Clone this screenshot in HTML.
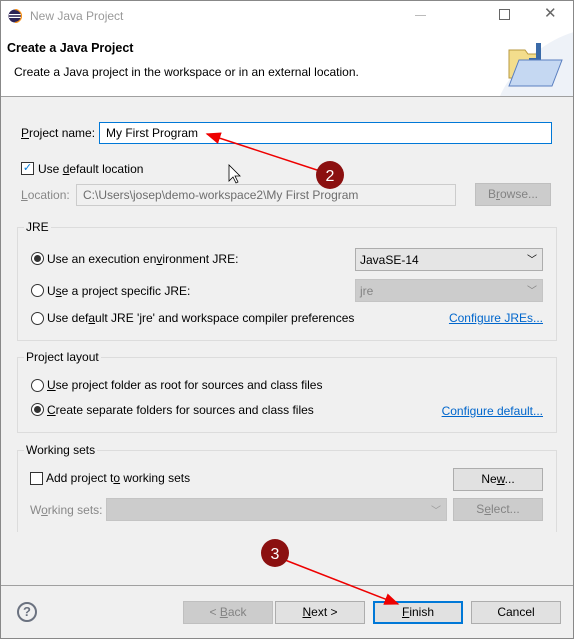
<!DOCTYPE html>
<html><head><meta charset="utf-8"><style>
*{box-sizing:border-box;margin:0;padding:0}
body{width:574px;height:639px;overflow:hidden;background:#f0f0f0;font-family:"Liberation Sans",sans-serif;font-size:12px;color:#000;position:relative}
.a{position:absolute;white-space:nowrap}
.btn{position:absolute;background:#e1e1e1;border:1px solid #adadad;text-align:center;line-height:20px}
.dis{background:#cccccc;border-color:#bfbfbf;color:#838383}
.grp{position:absolute;border:1px solid #dcdcdc;left:17px;right:17px}
.gl{position:absolute;background:#f0f0f0;padding:0 2px;left:6px;top:-8px}
.rad{position:absolute;width:13px;height:13px;border:1px solid #333;border-radius:50%;background:#fff}
.rad.on::after{content:"";position:absolute;left:2px;top:2px;width:7px;height:7px;border-radius:50%;background:#333}
.lnk{color:#0066cc;text-decoration:underline}
u{text-decoration:underline}
</style></head><body>
<div class="a" style="left:0;top:0;width:574px;height:97px;background:#fff;border-bottom:1px solid #a0a0a0"></div>
<div class="a" style="left:0;top:0;width:574px;height:639px;border:1px solid #888;pointer-events:none;z-index:5"></div>
<svg class="a" style="left:8px;top:9px" width="14" height="14" viewBox="0 0 14 14"><circle cx="7" cy="7" r="6.5" fill="#2c2255"/><rect x="1" y="5" width="12" height="1.2" fill="#fff"/><rect x="1" y="7.8" width="12" height="1.2" fill="#fff"/><path d="M7 .5a6.5 6.5 0 0 1 0 13" fill="none" stroke="#f7941e" stroke-width="1.3"/></svg>
<div class="a" style="left:30px;top:9px;color:#999;font-size:12px">New Java Project</div>
<div class="a" style="left:415px;top:15px;width:11px;height:1px;background:#bbb"></div>
<div class="a" style="left:499px;top:9px;width:11px;height:11px;border:1px solid #666"></div>
<div class="a" style="left:544px;top:4px;font-size:15px;color:#666">✕</div>
<div class="a" style="left:7px;top:41px;font-weight:bold;font-size:12.5px">Create a Java Project</div>
<div class="a" style="left:14px;top:65px">Create a Java project in the workspace or in an external location.</div>
<svg class="a" style="left:500px;top:32px" width="74" height="64"><path d="M74 0 C40 10 10 40 0 64 L74 64Z" fill="#eef2f8"/></svg>
<svg class="a" style="left:505px;top:40px" width="60" height="52" viewBox="0 0 60 52"><path d="M4 10h16l3 4h12v24H4z" fill="#f3dd8c" stroke="#b89a40"/><rect x="31" y="3" width="5" height="20" fill="#3a6aa8"/><rect x="24" y="18" width="12" height="5" fill="#3a6aa8"/><path d="M14 20h43l-10 26H4z" fill="#c5d8f2" stroke="#5a7fc0"/></svg>

<div class="a" style="left:21px;top:126px"><u>P</u>roject name:</div>
<div class="a" style="left:99px;top:122px;width:453px;height:22px;background:#fff;border:1px solid #0078d7;padding:3px 6px">My First Program</div>
<div class="a" style="left:21px;top:162px;width:13px;height:13px;border:1px solid #333;background:#fff;color:#0078d7;font-size:11px;line-height:11px;text-align:center">✓</div>
<div class="a" style="left:38px;top:162px">Use <u>d</u>efault location</div>
<div class="a" style="left:21px;top:188px;color:#888"><u>L</u>ocation:</div>
<div class="a" style="left:76px;top:184px;width:380px;height:22px;background:#f0f0f0;border:1px solid #ccc;padding:3px 6px;color:#6d6d6d">C:\Users\josep\demo-workspace2\My First Program</div>
<div class="btn dis" style="left:475px;top:183px;width:76px;height:23px">B<u>r</u>owse...</div>

<div class="grp" style="top:227px;height:114px"><span class="gl">JRE</span></div>
<div class="rad on" style="left:31px;top:252px"></div><div class="a" style="left:47px;top:252px">Use an execution en<u>v</u>ironment JRE:</div>
<div class="a" style="left:355px;top:248px;width:188px;height:23px;background:#e5e5e5;border:1px solid #adadad;padding:4px 4px">JavaSE-14<span style="position:absolute;right:5px;top:2px;font-size:10px">﹀</span></div>
<div class="rad" style="left:31px;top:284px"></div><div class="a" style="left:47px;top:284px">U<u>s</u>e a project specific JRE:</div>
<div class="a" style="left:355px;top:279px;width:188px;height:23px;background:#cccccc;border:1px solid #c4c4c4;padding:4px 4px;color:#838383">jre<span style="position:absolute;right:5px;top:2px;font-size:10px">﹀</span></div>
<div class="rad" style="left:31px;top:312px"></div><div class="a" style="left:47px;top:311px">Use def<u>a</u>ult JRE 'jre' and workspace compiler preferences</div>
<div class="a lnk" style="right:31px;top:311px">Configure JREs...</div>

<div class="grp" style="top:357px;height:76px"><span class="gl">Project layout</span></div>
<div class="rad" style="left:31px;top:379px"></div><div class="a" style="left:47px;top:378px"><u>U</u>se project folder as root for sources and class files</div>
<div class="rad on" style="left:31px;top:403px"></div><div class="a" style="left:47px;top:403px"><u>C</u>reate separate folders for sources and class files</div>
<div class="a lnk" style="right:31px;top:404px">Configure default...</div>

<div class="grp" style="top:450px;height:82px;border-bottom:none"><span class="gl">Working sets</span></div>
<div class="a" style="left:30px;top:472px;width:13px;height:13px;border:1px solid #333;background:#fff"></div>
<div class="a" style="left:46px;top:471px">Add project t<u>o</u> working sets</div>
<div class="btn" style="left:453px;top:468px;width:90px;height:23px">Ne<u>w</u>...</div>
<div class="a" style="left:30px;top:503px;color:#888">W<u>o</u>rking sets:</div>
<div class="a" style="left:106px;top:498px;width:341px;height:23px;background:#cccccc;border:1px solid #c4c4c4"><span style="position:absolute;right:5px;top:3px;font-size:10px;color:#999">﹀</span></div>
<div class="btn dis" style="left:453px;top:498px;width:90px;height:23px">S<u>e</u>lect...</div>

<div class="a" style="left:0;top:585px;width:574px;height:1px;background:#a0a0a0"></div>
<div class="a" style="left:17px;top:602px;width:20px;height:20px;border:2px solid #6b7280;border-radius:50%;text-align:center;font-weight:bold;font-size:13px;line-height:16px;color:#6b7280">?</div>
<div class="btn dis" style="left:183px;top:601px;width:90px;height:23px">&lt; <u>B</u>ack</div>
<div class="btn" style="left:275px;top:601px;width:90px;height:23px"><u>N</u>ext &gt;</div>
<div class="btn" style="left:373px;top:601px;width:90px;height:23px;border:2px solid #0078d7;line-height:19px"><u>F</u>inish</div>
<div class="btn" style="left:471px;top:601px;width:90px;height:23px">Cancel</div>

<svg class="a" style="left:0;top:0;z-index:6" width="574" height="639">
<defs><marker id="m" markerWidth="10" markerHeight="8" refX="9" refY="4" orient="auto"><path d="M0 0L10 4L0 8z" fill="#e00"/></marker></defs>
<line x1="320" y1="171" x2="207" y2="134" stroke="#e00" stroke-width="1.5" marker-end="url(#m)"/>
<line x1="285" y1="560" x2="398" y2="604" stroke="#e00" stroke-width="1.5" marker-end="url(#m)"/>
<circle cx="330" cy="175" r="14" fill="#8b1010"/>
<text x="330" y="181" fill="#fff" font-family="Liberation Sans" font-size="16" text-anchor="middle">2</text>
<circle cx="275" cy="553" r="14" fill="#8b1010"/>
<text x="275" y="559" fill="#fff" font-family="Liberation Sans" font-size="16" text-anchor="middle">3</text>
<path d="M229 165v16l4-4 3 6 2-1-3-6h5z" fill="#fff" stroke="#000" stroke-width="0.8"/>
</svg>
</body></html>
